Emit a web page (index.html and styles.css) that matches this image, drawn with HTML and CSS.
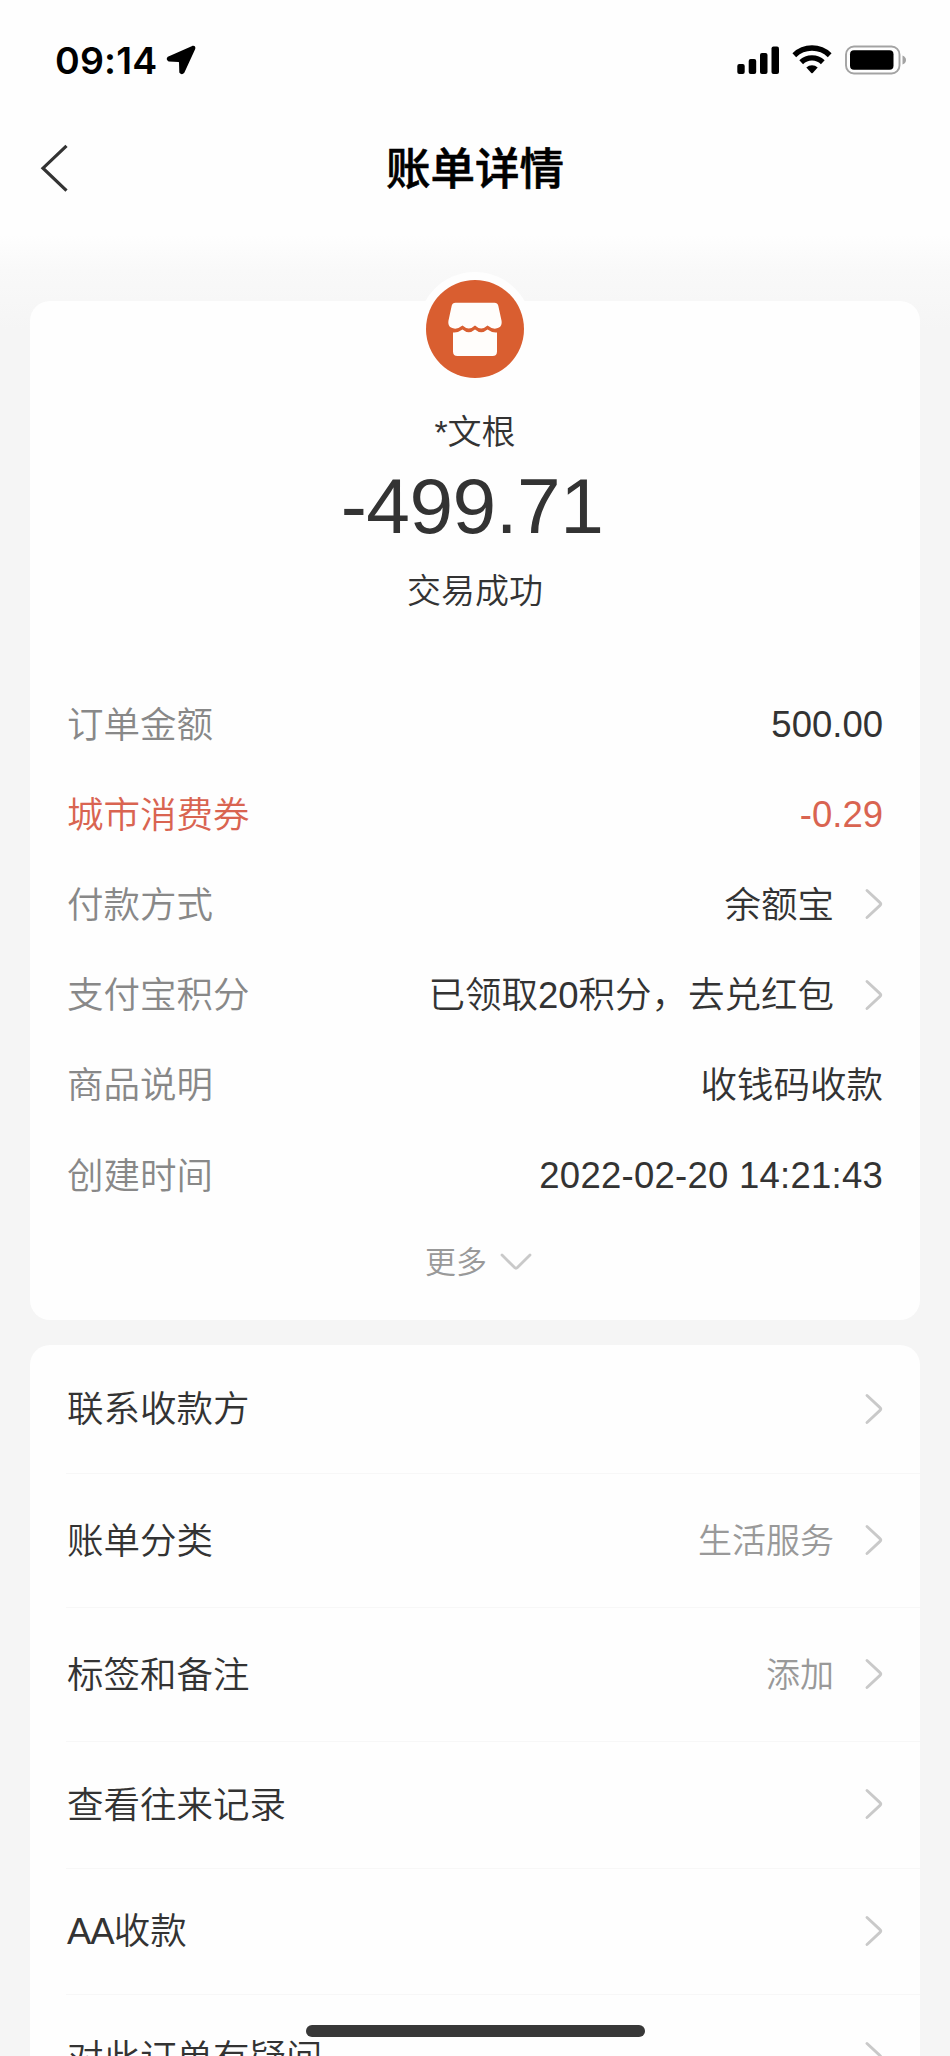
FILE: index.html
```html
<!DOCTYPE html>
<html lang="zh-CN">
<head>
<meta charset="utf-8">
<title>账单详情</title>
<link rel="stylesheet" href="styles.css">
</head>
<body>
<svg class="defs" width="0" height="0">
  <symbol id="arrow" viewBox="0 0 20 34"><path d="M3 3.500L16 15.600Q17.600 17 16 18.400L3 30.500" fill="none" stroke="#c9c9c9" stroke-width="2.900" stroke-linecap="round"/></symbol>
</svg>
<div class="screen">
  <header class="top">
    <div class="statusbar">
      <span class="time">09:14</span>
      <svg class="locate" width="30" height="30" viewBox="0 0 30 30"><path d="M26.600 1.700L2.200 12.600Q0.800 14.200 2.800 15.600L12.600 16Q13.800 16.200 13.900 17.200L14.200 27.200Q15.800 29.400 17.600 27.200L28.400 3.600Q28.800 1.200 26.600 1.700Z" stroke="#000" stroke-width="1.800" stroke-linejoin="round"/></svg>
      <span class="spacer"></span>
      <svg class="signal" width="43" height="30" viewBox="0 0 43 30"><rect x="0.300" y="19" width="7.400" height="10" rx="2"/><rect x="11.700" y="14" width="7.500" height="15" rx="2"/><rect x="23" y="8" width="7.500" height="21" rx="2"/><rect x="34.500" y="1.500" width="7.500" height="27.500" rx="2"/></svg>
      <svg class="wifi" width="40" height="30" viewBox="0 0 40 30"><g fill="none" stroke="#000" stroke-width="5.400"><path d="M2.300 10.200A25.500 25.500 0 0 1 37.700 10.200"/><path d="M9.200 17.200A15.600 15.600 0 0 1 30.800 17.200"/></g><path d="M14.300 22.400A8.500 8.500 0 0 1 25.700 22.400L20.700 27.900Q20 28.500 19.300 27.900Z"/></svg>
      <svg class="battery" width="62" height="30" viewBox="0 0 62 30"><rect x="1" y="1.500" width="53.500" height="27" rx="8" fill="none" stroke="#a3a3a3" stroke-width="1.900"/><rect x="5" y="5.300" width="43.500" height="19.500" rx="4"/><path d="M57.500 10.500Q61 12 61 15T57.500 19.500Z" fill="#a3a3a3"/></svg>
    </div>
    <div class="navbar">
      <svg class="back" width="30" height="48" viewBox="0 0 30 48"><path d="M26.500 1.800L3 24.200L26.500 46.600" fill="none" stroke="#333" stroke-width="3.200"/></svg>
      <h1 class="title">账单详情</h1>
    </div>
  </header>
  <main class="content">
    <section class="card bill">
      <div class="avatar">
        <svg width="98" height="98" viewBox="0 0 98 98"><circle cx="49" cy="49" r="49" fill="#d95e30"/><g fill="#fffdfb"><path d="M29.500 22.700H68.500Q71.600 22.700 72.300 25.700L75.600 41Q76.200 45.500 73 47.600Q67.500 50.500 61.500 45.600Q55.200 51.500 49 45.600Q42.800 51.500 36.500 45.600Q30.500 50.500 25 47.600Q21.800 45.500 22.400 41L25.700 25.700Q26.400 22.700 29.500 22.700Z"/><path d="M27 52.500Q32 53 36.500 49.600Q42.800 55 49 49.600Q55.200 55 61.500 49.600Q66 53 71 52.500V71.500Q71 76 66.500 76H31.500Q27 76 27 71.500Z"/></g></svg>
      </div>
      <p class="payee">*文根</p>
      <p class="amount">-499.71</p>
      <p class="state">交易成功</p>
      <dl class="details">
        <div class="detail"><dt>订单金额</dt><dd class="number">500.00</dd></div>
        <div class="detail coupon"><dt>城市消费券</dt><dd class="number">-0.29</dd></div>
        <div class="detail"><dt>付款方式</dt><dd>余额宝</dd><svg class="arrow"><use href="#arrow"/></svg></div>
        <div class="detail"><dt>支付宝积分</dt><dd>已领取20积分，去兑红包</dd><svg class="arrow"><use href="#arrow"/></svg></div>
        <div class="detail"><dt>商品说明</dt><dd>收钱码收款</dd></div>
        <div class="detail"><dt>创建时间</dt><dd class="number date">2022-02-20 14:21:43</dd></div>
      </dl>
      <div class="more"><span>更多</span><svg width="34" height="20" viewBox="0 0 34 20"><path d="M3 3L15.600 15.600Q17 17 18.400 15.600L31 3" fill="none" stroke="#c9c9c9" stroke-width="2.800" stroke-linecap="round"/></svg></div>
    </section>
    <section class="card menu">
      <div class="item first"><span class="name">联系收款方</span><svg class="arrow"><use href="#arrow"/></svg></div>
      <div class="item tall"><span class="name">账单分类</span><span class="value">生活服务</span><svg class="arrow"><use href="#arrow"/></svg></div>
      <div class="item tall"><span class="name">标签和备注</span><span class="value">添加</span><svg class="arrow"><use href="#arrow"/></svg></div>
      <div class="item"><span class="name">查看往来记录</span><svg class="arrow"><use href="#arrow"/></svg></div>
      <div class="item"><span class="name"><span class="latin">AA</span>收款</span><svg class="arrow"><use href="#arrow"/></svg></div>
      <div class="item"><span class="name">对此订单有疑问</span><svg class="arrow"><use href="#arrow"/></svg></div>
    </section>
  </main>
  <div class="home"></div>
</div>
</body>
</html>
```
FILE: styles.css
```css
* { box-sizing: border-box; }
body, h1, p, dl, dd { margin: 0; }
body { background: #f5f5f5; }
.defs { position: absolute; }
.screen {
  position: relative;
  width: 950px;
  height: 2056px;
  overflow: hidden;
  background: linear-gradient(#fefefe 0, #fefefe 235px, #f9f9f9 270px, #f5f5f5 330px);
  color: #333;
  font-family: "Liberation Sans", "Noto Sans CJK SC", sans-serif;
  font-size: 36.5px;
  font-weight: 350;
}
.top { height: 301px; }
.statusbar {
  display: flex;
  align-items: center;
  height: 120px;
  padding: 0 43px 0 55px;
}
.time {
  width: 102px;
  padding-top: 1px;
  color: #000;
  font: 600 37.5px/1 Inter, sans-serif;
  letter-spacing: 0.2px;
}
.locate { margin-left: 9px; }
.spacer { flex: 1; }
.wifi { margin-left: 12px; }
.battery { margin-left: 13px; }
.navbar {
  display: flex;
  align-items: center;
  height: 96px;
  padding: 0 40px;
}
.title {
  flex: 1;
  margin-right: 30px;
  padding-bottom: 6px;
  color: #000;
  font-size: 44.5px;
  font-weight: 500;
  -webkit-text-stroke: 0.6px #000;
  text-align: center;
}
.content { padding: 0 30px; }
.card { background: #fefefe; border-radius: 20px; }
.bill {
  height: 1018.5px;
  display: flex;
  flex-direction: column;
  align-items: center;
}
.avatar {
  width: 114px;
  height: 114px;
  margin-top: -29px;
  padding: 8px;
  background: #fefefe;
  border-radius: 50%;
}
.avatar svg { display: block; }
.payee { margin-top: 20px; font-size: 34px; line-height: 52px; }
.amount { font-size: 78.5px; line-height: 90px; margin-top: 3px; padding-right: 6px; letter-spacing: -0.5px; }
.state { font-size: 34px; line-height: 52px; margin-top: 14px; }
.details { align-self: stretch; margin-top: 61px; padding: 0 37px; }
.detail { display: flex; align-items: center; height: 90.2px; }
.detail dt { flex: 1; margin-top: -2px; color: #888; }
.detail dd { margin-top: -2px; }
.detail dd.number { margin-top: 4px; }
.date { letter-spacing: 0.25px; }
.detail.coupon, .detail.coupon dt { color: #d96451; }
.arrow { flex: none; width: 20px; height: 34px; margin: 2px -1px 0 30px; }
.more {
  display: flex;
  align-items: center;
  gap: 12px;
  height: 84px;
  margin: -1px 0 0 8px;
  color: #999;
  font-size: 31px;
}
.more span { margin-top: -2px; }
.more svg { margin-top: 3px; }
.menu { margin-top: 25.5px; height: 760px; padding-left: 36px; }
.bill { flex-shrink: 0; }
.item {
  display: flex;
  align-items: center;
  height: 126.5px;
  padding: 0 37px 3px 1px;
  border-bottom: 1.5px solid #f7f7f7;
}
.item.first { height: 129px; }
.item.tall { height: 134px; }
.name { flex: 1; margin-top: -2px; }
.latin { letter-spacing: -1px; }
.value { margin-top: -2px; color: #999; font-size: 34px; }
.home {
  position: absolute;
  left: 306px;
  top: 2024.5px;
  width: 339px;
  height: 12px;
  border-radius: 6px;
  background: #383838;
}
```
